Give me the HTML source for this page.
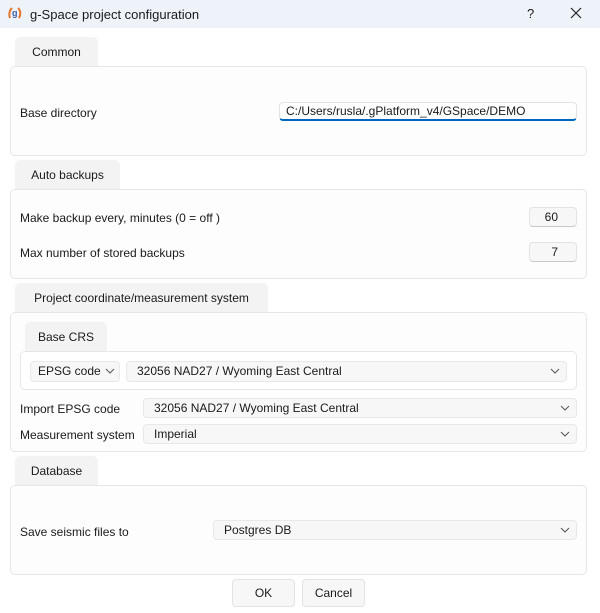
<!DOCTYPE html><html><head><meta charset="utf-8"><style>
*{box-sizing:border-box;margin:0;padding:0}
body{width:600px;height:613px;background:#fff;font-family:"Liberation Sans",sans-serif;font-size:12px;color:#1a1a1a;position:relative;overflow:hidden}
.a{position:absolute}
.title{left:0;top:0;width:600px;height:28px;background:#eef3f9}
.tab{background:#f3f3f3;border-radius:5px 5px 0 0;text-align:center;line-height:31px;height:29px}
.panel{border:1px solid #e6e6e6;border-radius:5px;background:#fdfdfd}
.lbl{line-height:14px}
.cb{background:#f7f7f7;border:1px solid #e8e8e8;border-radius:4px;padding-left:10px;line-height:19px}
.cb svg{position:absolute;right:6px;top:5px}
.spin{background:#f7f7f7;border:1px solid #e3e3e3;border-bottom-color:#c8c8c8;border-radius:4px;text-align:right;padding-right:18px;line-height:19px}
.btn{background:#f7f7f7;border:1px solid #e3e3e3;border-radius:4px;text-align:center;line-height:27px}
</style></head><body>
<div class="a title"></div>
<svg class="a" style="left:7px;top:6px" width="16" height="14" viewBox="0 0 16 14"><path d="M3 12 Q1 6 5 2" stroke="#e8762a" stroke-width="2" fill="none"/><path d="M12 12 Q15 6 11 2" stroke="#e8762a" stroke-width="2" fill="none"/><text x="5" y="10" font-size="9" font-weight="bold" fill="#3a5aa8" font-family="Liberation Sans">g</text></svg>
<div class="a" style="left:30px;top:7px;font-size:13px">g-Space project configuration</div>
<div class="a" style="left:527px;top:6px;font-size:13px">?</div>
<svg class="a" style="left:570px;top:7px" width="12" height="12"><path d="M1 1L11 11M11 1L1 11" stroke="#222" stroke-width="1.2"/></svg>

<div class="a tab" style="left:15px;top:37px;width:83px">Common</div>
<div class="a panel" style="left:10px;top:66px;width:577px;height:90px"></div>
<div class="a lbl" style="left:20px;top:106px">Base directory</div>
<div class="a" style="left:279px;top:102px;width:298px;height:19px;border:1px solid #e3e3e3;border-bottom:2px solid #0067c0;border-radius:4px;background:#fff;padding-left:6px;line-height:17px">C:/Users/rusla/.gPlatform_v4/GSpace/DEMO</div>

<div class="a tab" style="left:15px;top:160px;width:105px">Auto backups</div>
<div class="a panel" style="left:10px;top:189px;width:577px;height:90px"></div>
<div class="a lbl" style="left:20px;top:211px">Make backup every, minutes (0 = off )</div>
<div class="a spin" style="left:529px;top:207px;width:48px;height:20px">60</div>
<div class="a lbl" style="left:20px;top:246px">Max number of stored backups</div>
<div class="a spin" style="left:529px;top:242px;width:48px;height:20px">7</div>

<div class="a tab" style="left:15px;top:283px;width:253px">Project coordinate/measurement system</div>
<div class="a panel" style="left:10px;top:312px;width:577px;height:140px"></div>
<div class="a tab" style="left:25px;top:322px;width:82px">Base CRS</div>
<div class="a panel" style="left:20px;top:351px;width:557px;height:39px;background:#fff"></div>
<div class="a cb" style="left:30px;top:361px;width:90px;height:21px;padding-left:7px">EPSG code<svg width="10" height="8" style="right:4px"><path d="M1 2l4 4 4-4" stroke="#555" fill="none"/></svg></div>
<div class="a cb" style="left:126px;top:361px;width:441px;height:21px">32056 NAD27 / Wyoming East Central<svg width="10" height="8"><path d="M1 2l4 4 4-4" stroke="#555" fill="none"/></svg></div>
<div class="a lbl" style="left:20px;top:402px">Import EPSG code</div>
<div class="a cb" style="left:143px;top:398px;width:434px;height:20px">32056 NAD27 / Wyoming East Central<svg width="10" height="8"><path d="M1 2l4 4 4-4" stroke="#555" fill="none"/></svg></div>
<div class="a lbl" style="left:20px;top:428px">Measurement system</div>
<div class="a cb" style="left:143px;top:424px;width:434px;height:20px">Imperial<svg width="10" height="8"><path d="M1 2l4 4 4-4" stroke="#555" fill="none"/></svg></div>

<div class="a tab" style="left:15px;top:456px;width:83px">Database</div>
<div class="a panel" style="left:10px;top:485px;width:577px;height:90px"></div>
<div class="a lbl" style="left:20px;top:525px">Save seismic files to</div>
<div class="a cb" style="left:213px;top:520px;width:364px;height:20px">Postgres DB<svg width="10" height="8"><path d="M1 2l4 4 4-4" stroke="#555" fill="none"/></svg></div>

<div class="a btn" style="left:232px;top:579px;width:63px;height:28px">OK</div>
<div class="a btn" style="left:302px;top:579px;width:63px;height:28px">Cancel</div>
</body></html>
